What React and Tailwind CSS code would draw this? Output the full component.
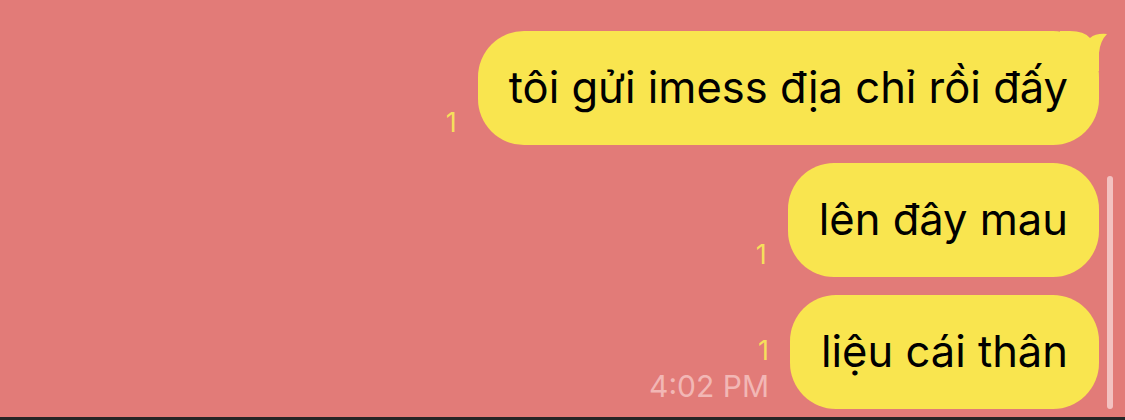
import React from "react";

const messages = [
  { id: 1, text: "tôi gửi imess địa chỉ rồi đấy", tail: true },
  { id: 2, text: "lên đây mau" },
  { id: 3, text: "liệu cái thân", time: "4:02 PM" },
];

function Bubble({ text, tail }) {
  return (
    <div className="relative">
      <div className="relative z-10 rounded-[46px] bg-[#F9E54F] px-[31px] h-[114px] flex items-center text-[43.5px] text-black leading-none">
        {text}
      </div>
      {tail && (
        <svg
          className="absolute top-0 right-[-11px] z-20"
          width="50"
          height="40"
          viewBox="0 0 50 40"
        >
          <path
            d="M0,0 H10 Q24,0 30,7 Q36,2 47,3 Q40,10 39,22 V40 H0 Z"
            fill="#F9E54F"
          />
        </svg>
      )}
    </div>
  );
}

export default function App() {
  return (
    <div
      className="relative w-[1125px] h-[420px] bg-[#E27B78] overflow-hidden"
      style={{ fontFamily: "Inter, 'Noto Sans', sans-serif" }}
    >
      <div className="flex flex-col items-end gap-[18px] pt-[31px] pr-[26px]">
        {messages.map((m) => (
          <div key={m.id} className="flex items-end gap-[21px]">
            <div className="flex flex-col items-end mb-[7px]">
              <span className="text-[27px] leading-[30px] text-[#F6DF5C]">1</span>
              {m.time && (
                <span className="text-[30px] leading-[32px] text-[#F2B7B5] mt-[4px]">
                  {m.time}
                </span>
              )}
            </div>
            <Bubble text={m.text} tail={m.tail} />
          </div>
        ))}
      </div>
      <div className="absolute right-[12px] top-[176px] h-[233px] w-[6px] rounded-full bg-[#F3C2C1]" />
      <div className="absolute bottom-0 left-0 right-0 h-[3px] bg-[#262626]" />
    </div>
  );
}
